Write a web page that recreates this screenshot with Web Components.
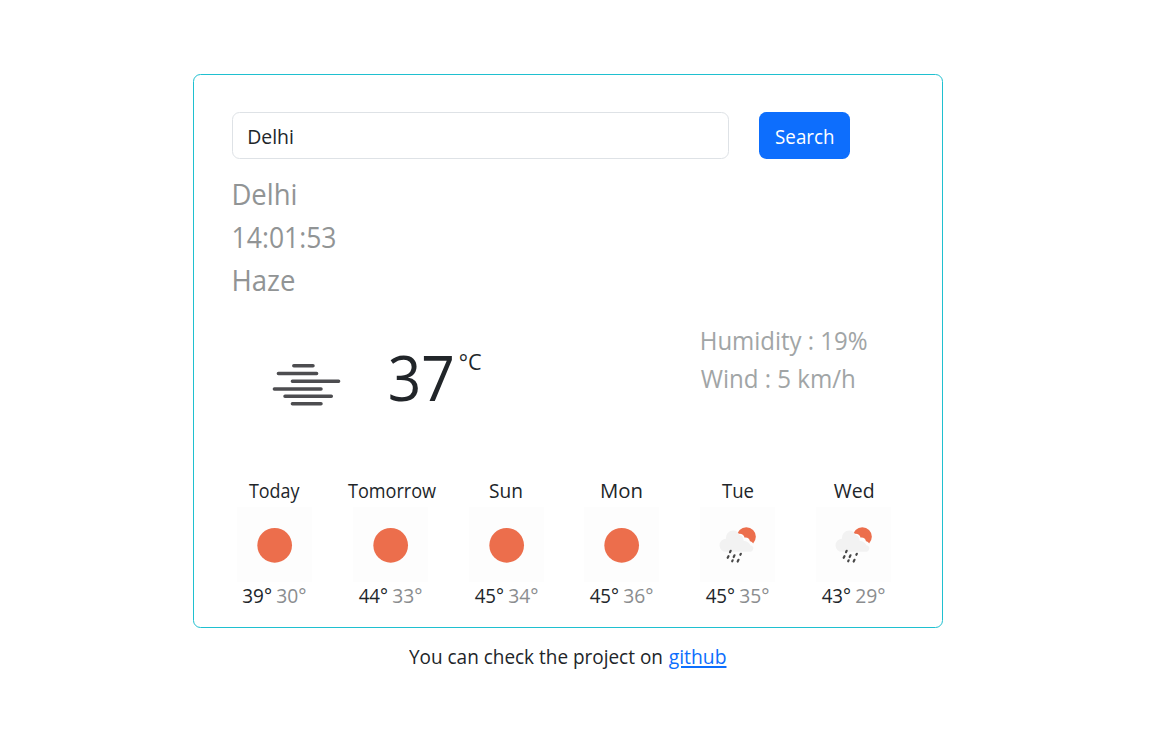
<!DOCTYPE html>
<html lang="en">
<head>
<meta charset="utf-8">
<title>Weather</title>
<style>
body{margin:0;background:#fff;color:#212529;font:19.6px/30px "Open Sans","Noto Sans",sans-serif}
</style>
</head>
<body>
<weather-app></weather-app>
<script>
// Text condensed or widened so that its inked width is exactly the value of "w".
const pen = document.createElement('canvas').getContext('2d');
customElements.define('fit-text', class extends HTMLElement {
  connectedCallback() {
    const root = this.attachShadow({mode: 'open'});
    root.innerHTML = '<style>:host{display:inline-block;white-space:pre}span{display:inline-block;transform-origin:0 0}:host([underline]) span{text-decoration:underline;text-decoration-thickness:1.5px;text-underline-offset:2px}</style><span><slot></slot></span>';
    const cs = getComputedStyle(this), w = +this.getAttribute('w');
    pen.font = cs.fontWeight + ' 200px ' + cs.fontFamily;
    const k = parseFloat(cs.fontSize) / 200;
    const m = pen.measureText(this.textContent);
    const left = m.actualBoundingBoxLeft * k;
    const ink = left + m.actualBoundingBoxRight * k;
    const s = w / ink;
    this.style.width = w + 'px';
    root.querySelector('span').style.transform = `translateX(${(left * s).toFixed(2)}px) scaleX(${s.toFixed(4)})`;
  }
});

customElements.define('search-bar', class extends HTMLElement {
  connectedCallback() {
    this.attachShadow({mode: 'open'}).innerHTML = `<style>
      :host{display:flex;gap:30px}
      .field,.btn{box-sizing:border-box;height:47px;border-radius:7.5px;line-height:49px}
      .field{width:497px;border:1px solid #dee2e6;padding-left:15.5px;line-height:47px}
      .btn{width:91px;background:#0d6efd;color:#fff;text-align:center}
    </style>
    <div class="field"><fit-text w="43.5">Delhi</fit-text></div>
    <div class="btn"><fit-text w="57">Search</fit-text></div>`;
  }
});

customElements.define('current-weather', class extends HTMLElement {
  connectedCallback() {
    this.attachShadow({mode: 'open'}).innerHTML = `<style>
      :host{display:block}
      .place{margin-top:12.5px;padding-left:2px;font-size:28.6px;line-height:43px;color:#919495}
      .place div{height:43px}
      .row{display:flex;height:150px;margin-top:20px}
      svg{width:76px;height:56px;margin:37px 0 0 36px;flex:none}
      .temp{display:flex;margin-left:45.5px;width:312.5px}
      .num{font-size:63px;line-height:80px;padding-top:16.5px}
      .unit{margin:26px 0 0 8.5px;font-size:21px}
      .info{font-size:24.8px;line-height:38px;color:#a1a5a6}
      .info div{height:38px}
      .info div+div{margin-left:-1px}
    </style>
    <div class="place">
      <div><fit-text w="61.5">Delhi</fit-text></div>
      <div><fit-text w="101">14:01:53</fit-text></div>
      <div><fit-text w="60">Haze</fit-text></div>
    </div>
    <div class="row">
      <svg viewBox="268 357.5 76 56" fill="none" stroke="#4d4d50" stroke-width="3.5" stroke-linecap="round">
        <path d="M293.8 365.2H313M278.4 373H316.6M292.4 380.8H338.6M274.4 388.4H321M285 395.8H331.3M292.4 403.2H321"/>
      </svg>
      <div class="temp">
        <div class="num"><fit-text w="62">37</fit-text></div>
        <div class="unit"><fit-text w="21">°C</fit-text></div>
      </div>
      <div class="info">
        <div><fit-text w="164.5">Humidity : 19%</fit-text></div>
        <div><fit-text w="153">Wind : 5 km/h</fit-text></div>
      </div>
    </div>`;
  }
});

const SUN = '<circle cx="113" cy="115" r="52" fill="#ec6e4c"/>';
const RAIN = `<g transform="translate(3 0)"><circle cx="136" cy="89" r="28.5" fill="#ec6e4c"/>
  <path d="M106 84c10-8 22-3 25 8 9-1 15 4 16 11 4 1 9 4 10 8l-8 8-40-5z" fill="#fdfdfd"/>
  <path d="M75 134.500a19.500 19.500 0 0 1 0-39 c0-16 9-25 22-25 9 0 15 5 18 13 8 2 13 9 13 18 10 1 17 7 20 13 7 2 9 5 9 9 0 7-6 11-12 11z" fill="#f2f2f2"/>
  <path d="M89 131.500l-2 4M82.500 147.500l-2.500 5M100.500 145l-2.500 5M119.500 140.500l-1.500 3M95 160l-1.500 3M112.500 158.500l-2.500 5" stroke="#484848" stroke-width="6.500" stroke-linecap="round"/></g>`;
customElements.define('day-card', class extends HTMLElement {
  connectedCallback() {
    const a = n => this.getAttribute(n);
    this.attachShadow({mode: 'open'}).innerHTML = `<style>
      :host{display:flex;flex-direction:column;align-items:center}
      svg{width:75px;height:75px;margin-top:1.5px;background:#fdfdfd}
      .t{display:flex;gap:6px;line-height:27px}
      .lo{color:#8b8d8f}
    </style>
    <div style="padding-left:${a('shift') || 0}px"><fit-text w="${a('w')}">${a('day')}</fit-text></div>
    <svg viewBox="0 0 225 225" fill="none">${a('icon') === 'rain' ? RAIN : SUN}</svg>
    <div class="t"><fit-text w="28">${a('hi')}°</fit-text><fit-text class="lo" w="28.5">${a('lo')}°</fit-text></div>`;
  }
});

customElements.define('weather-card', class extends HTMLElement {
  connectedCallback() {
    this.attachShadow({mode: 'open'}).innerHTML = `<style>
      :host{display:block;box-sizing:border-box;width:750px;height:554px;padding:37px 0 0 38px;border:1px solid #1fc0d0;border-radius:7.5px}
      .days{display:grid;grid-template-columns:repeat(6,115.7px);margin:5px 0 0 -15.2px}
    </style>
    <search-bar></search-bar>
    <current-weather></current-weather>
    <div class="days"><slot></slot></div>`;
  }
});

customElements.define('weather-app', class extends HTMLElement {
  connectedCallback() {
    this.attachShadow({mode: 'open'}).innerHTML = `<style>
      :host{display:block;padding:74px 0 0 193px}
      footer{display:flex;gap:7px;padding:14px 0 0 216px}
      a{color:#0d6efd;text-decoration:none}
    </style>
    <weather-card>
      <day-card day="Today" w="50.5" hi="39" lo="30"></day-card>
      <day-card day="Tomorrow" w="88" shift="3" hi="44" lo="33"></day-card>
      <day-card day="Sun" w="31.5" hi="45" lo="34"></day-card>
      <day-card day="Mon" w="39.5" hi="45" lo="36"></day-card>
      <day-card day="Tue" w="31" hi="45" lo="35" icon="rain"></day-card>
      <day-card day="Wed" w="39" hi="43" lo="29" icon="rain"></day-card>
    </weather-card>
    <footer><fit-text w="252.5">You can check the project on</fit-text><a href="#"><fit-text underline w="56.5">github</fit-text></a></footer>`;
  }
});
</script>
</body>
</html>
